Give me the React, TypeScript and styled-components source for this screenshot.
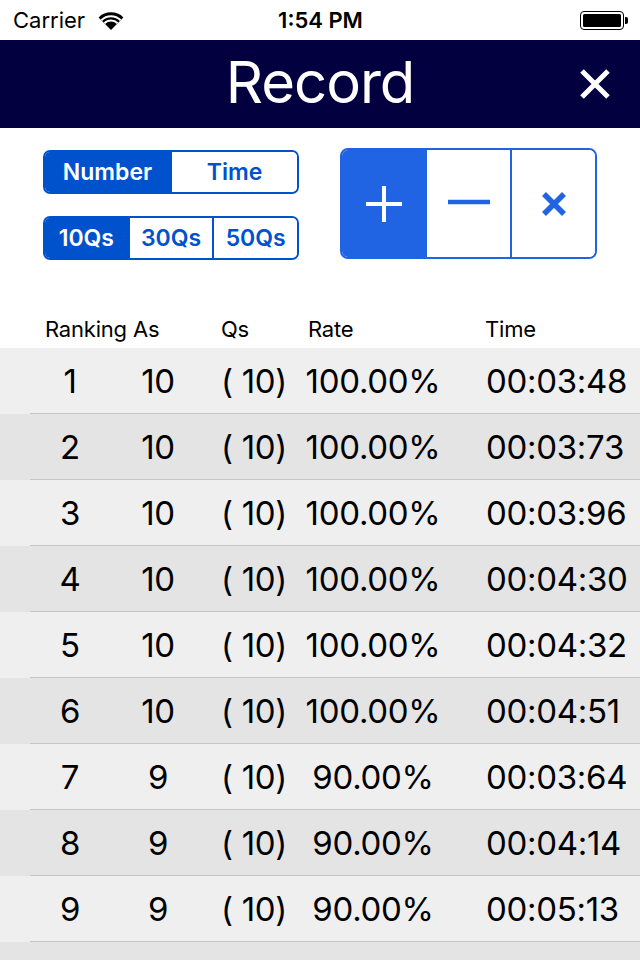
import React, { useState } from "react";
import styled, { createGlobalStyle, css } from "styled-components";

const GlobalStyle = createGlobalStyle`
  html, body {
    margin: 0;
    padding: 0;
    background: #ffffff;
  }
  body {
    font-family: "Inter", "Roboto", "Liberation Sans", sans-serif;
    color: #000;
  }
  * {
    box-sizing: border-box;
  }
`;

const Screen = styled.div`
  width: 640px;
  height: 960px;
  overflow: hidden;
  display: flex;
  flex-direction: column;
  background: #fff;
`;

/* status bar */
const StatusBar = styled.div`
  height: 40px;
  display: grid;
  grid-template-columns: 1fr auto 1fr;
  align-items: center;
  padding: 0 12px 0 13px;
  font-size: 22px;
`;

const Carrier = styled.div`
  display: flex;
  align-items: center;
  gap: 13px;
`;

const Clock = styled.div`
  font-weight: 600;
`;

const Battery = styled.div`
  justify-self: end;
  display: flex;
  align-items: center;
`;

const BatteryBody = styled.div`
  width: 44px;
  height: 19px;
  border: 1.5px solid #000;
  border-radius: 4px;
  padding: 2px;
  &::after {
    content: "";
    display: block;
    width: 100%;
    height: 100%;
    background: #000;
    border-radius: 1.5px;
  }
`;

const BatteryNub = styled.div`
  width: 3px;
  height: 7px;
  background: #000;
  border-radius: 0 2px 2px 0;
  margin-left: 1px;
`;

/* navigation bar */
const NavBar = styled.div`
  height: 88px;
  background: #03003f;
  display: grid;
  grid-template-columns: 88px 1fr 88px;
  align-items: center;
`;

const Title = styled.h1`
  margin: 0;
  grid-column: 2;
  text-align: center;
  color: #fff;
  font-size: 58px;
  font-weight: 400;
  letter-spacing: -1px;
  line-height: 1;
  padding-bottom: 4px;
`;

const CloseButton = styled.button`
  grid-column: 3;
  justify-self: start;
  margin-left: 26px;
  background: none;
  border: none;
  padding: 0;
  width: 34px;
  height: 34px;
  display: flex;
  align-items: center;
  justify-content: center;
`;

/* controls */
const Controls = styled.div`
  display: flex;
  gap: 41px;
  padding: 21px 0 0 43px;
  height: 180px;
`;

const LeftStack = styled.div`
  display: flex;
  flex-direction: column;
  gap: 22px;
  padding-top: 1px;
`;

const Segmented = styled.div<{ $color: string; $height: number }>`
  display: flex;
  width: 256px;
  height: ${(p) => p.$height}px;
  border: 2px solid ${(p) => p.$color};
  border-radius: 7px;
  overflow: hidden;
`;

const Segment = styled.button<{ $color: string; $active: boolean }>`
  flex: 1;
  border: none;
  margin: 0;
  padding: 0;
  font-family: inherit;
  font-size: 23px;
  font-weight: 600;
  color: ${(p) => (p.$active ? "#fff" : p.$color)};
  background: ${(p) => (p.$active ? p.$color : "#fff")};
  display: flex;
  align-items: center;
  justify-content: center;
  & + & {
    border-left: 2px solid ${(p) => p.$color};
  }
`;

const OpGroup = styled.div`
  display: flex;
  width: 257px;
  height: 111px;
  margin-top: -1px;
  border: 2px solid #2064e3;
  border-radius: 8px;
  overflow: hidden;
`;

const OpButton = styled.button<{ $active: boolean }>`
  flex: 1;
  border: none;
  margin: 0;
  padding: 0;
  background: ${(p) => (p.$active ? "#2064e3" : "#fff")};
  display: flex;
  align-items: center;
  justify-content: center;
  & + & {
    border-left: 2px solid #2064e3;
  }
`;

/* ranking table */
const HeaderRow = styled.div`
  display: grid;
  grid-template-columns: 88px 88px 87px 177px 1fr;
  padding-left: 45px;
  padding-top: 2px;
  height: 40px;
  align-items: center;
  font-size: 22px;
  letter-spacing: -0.2px;
`;

const Rows = styled.div`
  flex: 1;
  display: flex;
  flex-direction: column;
`;

const Row = styled.div<{ $even: boolean }>`
  flex: none;
  height: 66px;
  display: grid;
  grid-template-columns: 80px 96px 94px 146px 1fr;
  align-items: center;
  padding-left: 30px;
  font-size: 33px;
  letter-spacing: -0.3px;
  background: ${(p) => (p.$even ? "#e4e4e4" : "#efefef")};
  position: relative;
  &::after {
    content: "";
    position: absolute;
    left: 30px;
    right: 0;
    bottom: 0;
    height: 1px;
    background: #c6c6c8;
  }
`;

const Cell = styled.div<{ $align?: string; $pad?: number }>`
  text-align: ${(p) => p.$align || "center"};
  padding-left: ${(p) => p.$pad || 0}px;
  white-space: nowrap;
`;

const Filler = styled.div`
  flex: 1;
  background: #e4e4e4;
`;

const WifiIcon = () => (
  <svg width="26" height="19" viewBox="0 0 26 19">
    <path d="M13 19 L0.6 6.4 A17.5 17.5 0 0 1 25.4 6.4 Z" fill="#000" />
    <path d="M3.4 9.2 A13.5 13.5 0 0 1 22.6 9.2" stroke="#fff" strokeWidth="2" fill="none" />
    <path d="M6.4 12.3 A9.2 9.2 0 0 1 19.6 12.3" stroke="#fff" strokeWidth="2" fill="none" />
  </svg>
);

const records = [
  { as: 10, rate: "100.00%", time: "00:03:48" },
  { as: 10, rate: "100.00%", time: "00:03:73" },
  { as: 10, rate: "100.00%", time: "00:03:96" },
  { as: 10, rate: "100.00%", time: "00:04:30" },
  { as: 10, rate: "100.00%", time: "00:04:32" },
  { as: 10, rate: "100.00%", time: "00:04:51" },
  { as: 9, rate: "90.00%", time: "00:03:64" },
  { as: 9, rate: "90.00%", time: "00:04:14" },
  { as: 9, rate: "90.00%", time: "00:05:13" },
];

function App() {
  const [sort, setSort] = useState("Number");
  const [count, setCount] = useState("10Qs");
  const [op, setOp] = useState("plus");
  const dark = "#0052cc";

  return (
    <Screen>
      <GlobalStyle />
      <StatusBar>
        <Carrier>
          Carrier <WifiIcon />
        </Carrier>
        <Clock>1:54 PM</Clock>
        <Battery>
          <BatteryBody />
          <BatteryNub />
        </Battery>
      </StatusBar>

      <NavBar>
        <Title>Record</Title>
        <CloseButton>
          <svg width="30" height="30" viewBox="0 0 30 30">
            <path d="M2 2 L28 28 M28 2 L2 28" stroke="#fff" strokeWidth="5" />
          </svg>
        </CloseButton>
      </NavBar>

      <Controls>
        <LeftStack>
          <Segmented $color={dark} $height={44}>
            {["Number", "Time"].map((s) => (
              <Segment key={s} $color={dark} $active={sort === s} onClick={() => setSort(s)}>
                {s}
              </Segment>
            ))}
          </Segmented>
          <Segmented $color={dark} $height={44}>
            {["10Qs", "30Qs", "50Qs"].map((s) => (
              <Segment key={s} $color={dark} $active={count === s} onClick={() => setCount(s)}>
                {s}
              </Segment>
            ))}
          </Segmented>
        </LeftStack>

        <OpGroup>
          <OpButton $active={op === "plus"} onClick={() => setOp("plus")}>
            <svg width="38" height="38" viewBox="0 0 38 38">
              <path d="M19 1 V37 M1 19 H37" stroke={op === "plus" ? "#fff" : "#2064e3"} strokeWidth="4" />
            </svg>
          </OpButton>
          <OpButton $active={op === "minus"} onClick={() => setOp("minus")}>
            <svg width="44" height="10" viewBox="0 0 44 10" style={{ marginTop: -4 }}>
              <path d="M1 5 H43" stroke={op === "minus" ? "#fff" : "#2064e3"} strokeWidth="4.5" />
            </svg>
          </OpButton>
          <OpButton $active={op === "times"} onClick={() => setOp("times")}>
            <svg width="26" height="26" viewBox="0 0 26 26">
              <path d="M3 3 L23 23 M23 3 L3 23" stroke={op === "times" ? "#fff" : "#2064e3"} strokeWidth="5.5" />
            </svg>
          </OpButton>
        </OpGroup>
      </Controls>

      <HeaderRow>
        <div>Ranking</div>
        <div>As</div>
        <div>Qs</div>
        <div>Rate</div>
        <div>Time</div>
      </HeaderRow>

      <Rows>
        {records.map((r, i) => (
          <Row key={i} $even={i % 2 === 1}>
            <Cell>{i + 1}</Cell>
            <Cell>{r.as}</Cell>
            <Cell $align="left" $pad={15}>( 10)</Cell>
            <Cell>{r.rate}</Cell>
            <Cell $align="left" $pad={40}>{r.time}</Cell>
          </Row>
        ))}
        <Filler />
      </Rows>
    </Screen>
  );
}

export default App;
